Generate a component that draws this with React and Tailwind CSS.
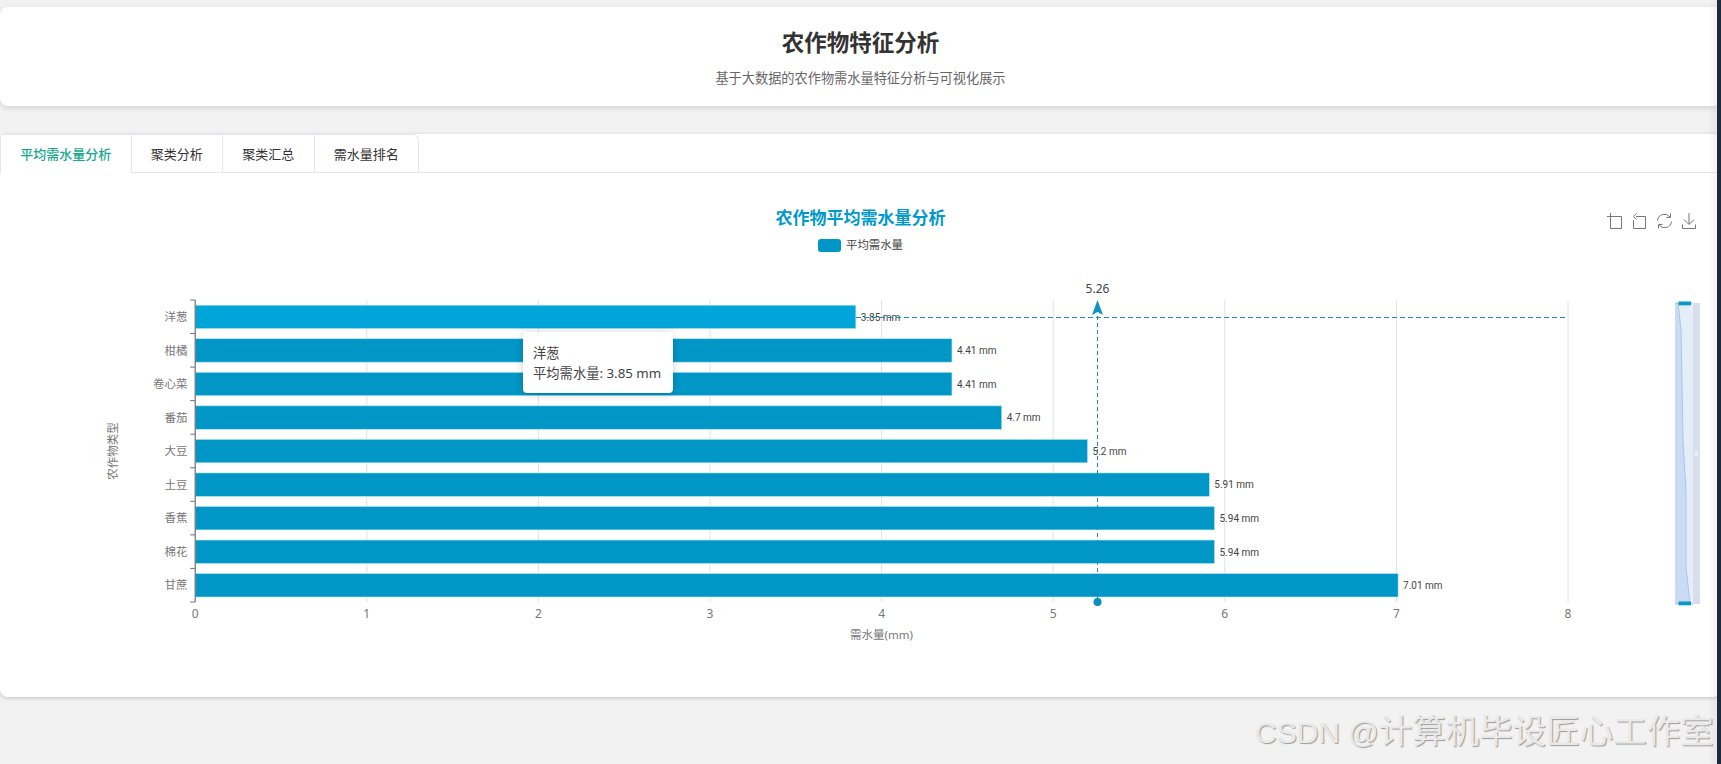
const CROPS = [
  { name: '洋葱', value: 3.85, active: true },
  { name: '柑橘', value: 4.41 },
  { name: '卷心菜', value: 4.41 },
  { name: '番茄', value: 4.7 },
  { name: '大豆', value: 5.2 },
  { name: '土豆', value: 5.91 },
  { name: '香蕉', value: 5.94 },
  { name: '棉花', value: 5.94 },
  { name: '甘蔗', value: 7.01 },
];

const TABS = ['平均需水量分析', '聚类分析', '聚类汇总', '需水量排名'];

// plot area, in page pixels
const X0 = 195.2;
const UNIT = 171.6;
const Y0 = 300;
const BAND = 33.55;
const TICKS = [0, 1, 2, 3, 4, 5, 6, 7, 8];
const POINTER_X = 1097.5;
const SHADOW_LINE = 'L1681 330L1683 440L1686 490V567L1690 604';

function Toolbox() {
  return (
    <svg width="90" height="16" viewBox="0 0 90 16" fill="none" stroke="#777" strokeWidth="1">
      {/* zoom */}
      <path d="M0 3.5H14.5V15.5H3.5V0" />
      {/* back */}
      <path d="M29 3.5H38.5V15.5H26.5V7M29.5 0.5L26.5 3.5L29.5 6.5" />
      {/* restore */}
      <path d="M50.5 7.5A7 7 0 0 1 63 4M64.5 8.5A7 7 0 0 1 52 12M63.5 0.5V4.5H59.5M51.5 15.5V11.5H55.5" />
      {/* save */}
      <path d="M82 0V11M77 6.5L82 11.5L87 6.5M75.5 11.5V15.5H88.5V11.5" />
    </svg>
  );
}

function Chart() {
  return (
    <svg width="1721" height="390" viewBox="0 270 1721 390" className="block">
      {/* grid */}
      {TICKS.slice(1).map((t) => (
        <line key={t} x1={X0 + t * UNIT} x2={X0 + t * UNIT} y1={Y0} y2={Y0 + 302} stroke="#dfe2e8" strokeWidth="1" />
      ))}

      {/* bars + labels */}
      {CROPS.map((c, i) => {
        const y = Y0 + i * BAND + 5.2;
        const right = X0 + c.value * UNIT;
        return (
          <g key={c.name}>
            <rect
              x={X0}
              y={y}
              width={c.value * UNIT}
              height={23.4}
              fill={c.active ? '#00a6d9' : '#0096c6'}
              stroke="#b5e6f4"
              strokeWidth="0.6"
            />
            <text x={right + 5} y={y + 15.5} fontSize="10" fill="#444" fontFamily="Roboto, sans-serif">
              {c.value} mm
            </text>
            <text x={187.5} y={y + 15.8} fontSize="11.5" fill="#777" textAnchor="end">
              {c.name}
            </text>
          </g>
        );
      })}

      {/* y axis */}
      <line x1={X0} x2={X0} y1={Y0} y2={Y0 + 302} stroke="#6e7079" strokeWidth="1.2" />
      {CROPS.map((c, i) => (
        <line key={c.name} x1={X0 - 5} x2={X0} y1={Y0 + i * BAND} y2={Y0 + i * BAND} stroke="#6e7079" strokeWidth="1" />
      ))}
      <line x1={X0 - 5} x2={X0} y1={Y0 + 302} y2={Y0 + 302} stroke="#6e7079" strokeWidth="1" />
      <text x={0} y={0} fontSize="11.5" fill="#777" textAnchor="middle" transform="translate(117 451) rotate(-90)">
        农作物类型
      </text>

      {/* x axis labels */}
      {TICKS.map((t) => (
        <text key={t} x={X0 + t * UNIT} y={617.5} fontSize="12" fill="#777" textAnchor="middle">
          {t}
        </text>
      ))}
      <text x={881.5} y={639} fontSize="11.5" fill="#777" textAnchor="middle">
        需水量(mm)
      </text>

      {/* cross pointer */}
      <line x1={856} x2={1568} y1={317.5} y2={317.5} stroke="#1f8fb0" strokeWidth="1" strokeDasharray="5 3" />
      <line x1={POINTER_X} x2={POINTER_X} y1={316} y2={600} stroke="#1a8cb0" strokeWidth="1" strokeDasharray="4 3" />
      <path d={`M${POINTER_X} 300L${POINTER_X + 5.5} 315L${POINTER_X} 312L${POINTER_X - 5.5} 315Z`} fill="#0a94bf" />
      <circle cx={POINTER_X} cy={602} r="4" fill="#0a8fbd" />
      <text x={POINTER_X} y={293} fontSize="12" fill="#444" textAnchor="middle">
        5.26
      </text>

      {/* data zoom slider */}
      <rect x={1675} y={303} width={25} height={301} fill="#d8deec" />
      <rect x={1675} y={303} width={18} height={301} fill="#e4edf8" />
      <path d={`M1675 303H1678${SHADOW_LINE}H1675Z`} fill="#cadcf3" />
      <path d={`M1678 303${SHADOW_LINE}`} fill="none" stroke="#a9c5ee" strokeWidth="1" />
      <line x1={1675} x2={1693} y1={303} y2={303} stroke="#a8aeb8" strokeWidth="0.8" />
      <line x1={1675} x2={1693} y1={604} y2={604} stroke="#a8aeb8" strokeWidth="0.8" />
      <rect x={1678.5} y={301.5} width={12.5} height={3.8} fill="#0a98c6" />
      <rect x={1678.5} y={601.5} width={12.5} height={3.8} fill="#0a98c6" />
      <path d="M1694.5 451.5H1698M1694.5 453.5H1698M1694.5 455.5H1698" stroke="#fff" strokeWidth="0.8" />
    </svg>
  );
}

export default function App() {
  return (
    <div className="relative h-[764px] w-[1721px] overflow-hidden bg-[#f2f2f2] pt-[7px] font-['Noto_Sans','Noto_Sans_CJK_SC',sans-serif] text-[#333]">
      {/* Header */}
      <div className="flex h-[99px] flex-col items-center rounded-lg bg-white pt-[19px] shadow-[0_2px_6px_rgba(0,0,0,0.13)]">
        <h1 className="text-[22.5px] font-bold leading-[34px] text-[#333]">农作物特征分析</h1>
        <p className="mt-[8px] text-[13.2px] leading-[20px] text-[#666]">基于大数据的农作物需水量特征分析与可视化展示</p>
      </div>

      {/* Main card */}
      <div className="relative mt-[28px] h-[563px] rounded-lg bg-white shadow-[0_1px_4px_rgba(0,0,0,0.2)]">
        {/* Tabs */}
        <div className="flex h-[39px] border-b border-[#e4e7ed]">
          <div className="flex rounded-t-md border border-b-0 border-[#e4e7ed]">
            {TABS.map((tab, i) => (
              <div
                key={tab}
                className={`-mb-px flex items-center border-[#e4e7ed] px-[19.25px] pt-px text-[13px] ${
                  i === 0 ? 'h-[39px] bg-white font-medium text-[#16a78f]' : 'h-[38px] border-l text-[#333]'
                }`}
              >
                {tab}
              </div>
            ))}
          </div>
        </div>

        {/* Chart head */}
        <div className="grid grid-cols-[1fr_auto_1fr] pt-[33px]">
          <div />
          <h2 className="text-[17px] font-bold leading-[24px] text-[#0099cc]">农作物平均需水量分析</h2>
          <div className="flex items-start justify-end pr-[24px] pt-[7px]">
            <Toolbox />
          </div>
        </div>
        <div className="mt-[8px] flex h-[14px] items-center justify-center gap-[5px]">
          <span className="h-[13px] w-[23px] rounded-[3px] bg-[#0097c7]" />
          <span className="text-[11.4px] leading-[14px] text-[#444]">平均需水量</span>
        </div>

        <div className="mt-[18px]">
          <Chart />
        </div>

        {/* Tooltip */}
        <div className="absolute left-[523px] top-[198px] h-[61px] w-[150px] rounded-[4px] bg-white pl-[10px] pt-[11px] text-[13.3px] leading-[20px] text-[#444] shadow-[0_1px_8px_rgba(0,0,0,0.2)]">
          <div>洋葱</div>
          <div className="whitespace-nowrap">平均需水量: 3.85 mm</div>
        </div>
      </div>

      {/* Watermark */}
      <div className="absolute left-[1255px] top-[712px] whitespace-nowrap font-['Liberation_Sans','Noto_Sans_CJK_SC',sans-serif] text-[33.5px] leading-[40px] text-[#e9e9e9] [text-shadow:1px_1px_1px_#9a9a9a]">
        <span className="text-[30px]">CSDN @</span>计算机毕设匠心工作室
      </div>

      {/* Window edge */}
      <div className="absolute inset-y-0 right-0 w-[4px] bg-[#1d2a3c] shadow-[-4px_0_6px_rgba(0,0,0,0.08)]" />
    </div>
  );
}
